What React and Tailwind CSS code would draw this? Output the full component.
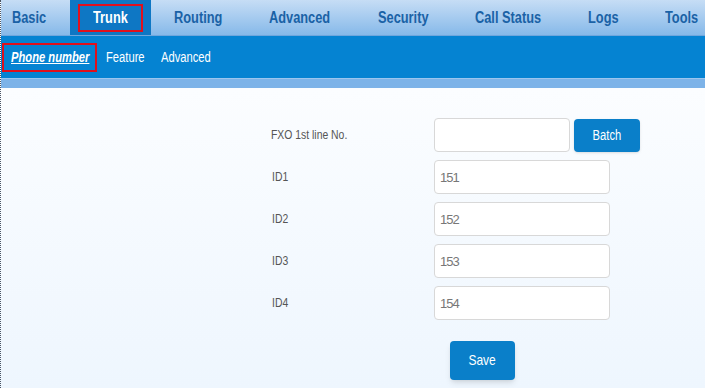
import React, { useState } from "react";

// tab widths follow the reference spacing (text + ~23px each side)
const tabs = [
  { name: "Basic", w: "w-[69px] pl-[11px]" },
  { name: "Trunk", w: "w-[81px] pl-[23px]" },
  { name: "Routing", w: "w-[95px] pl-[23px]" },
  { name: "Advanced", w: "w-[108px] pl-[23px]" },
  { name: "Security", w: "w-[97px] pl-[24px]" },
  { name: "Call Status", w: "w-[113px] pl-[24px]" },
  { name: "Logs", w: "w-[77px] pl-[24px]" },
  { name: "Tools", w: "w-[65px] pl-[24px]" },
];

const font = "font-['Liberation_Sans',Arial,sans-serif]";
const squeeze = "inline-block scale-x-[0.8] origin-left whitespace-nowrap";

const App = () => {
  const [ids, setIds] = useState({ ID1: "151", ID2: "152", ID3: "153", ID4: "154" });
  const [fxo, setFxo] = useState("");

  return (
    <div className={`min-h-[388px] w-[705px] overflow-hidden border-l border-dotted border-gray-600 ${font} bg-gradient-to-b from-white to-[#eef6fe]`}>
      {/* Top nav */}
      <div className="flex h-9 bg-gradient-to-b from-[#c6ddf5] to-[#86b9e9] border-b border-[#6fa6dc]">
        {tabs.map((t) => (
          <div
            key={t.name}
            className={`relative flex shrink-0 items-center h-full text-[16px] font-bold ${t.w} ${
              t.name === "Trunk" ? "bg-[#0e77c4] text-white" : "text-[#1a62a6]"
            }`}
          >
            {t.name === "Trunk" && (
              <span className="absolute left-[8px] right-[8px] top-[4px] bottom-[3px] border-2 border-[#e0101c]"></span>
            )}
            <span className={squeeze}>{t.name}</span>
          </div>
        ))}
      </div>

      {/* Sub nav */}
      <div className="flex items-center h-[42px] bg-[#0583d2] pl-[1px] text-white text-[14px]">
        <div className="flex items-center w-[95px] h-[29px] pl-[7px] border-2 border-[#e0101c] font-bold italic underline">
          <span className={squeeze}>Phone number</span>
        </div>
        <div className="w-[64px] pl-[9px]">
          <span className={squeeze}>Feature</span>
        </div>
        <div>
          <span className={squeeze}>Advanced</span>
        </div>
      </div>
      <div className="h-[10px] bg-[#7db3e8] border-t border-[#9cc6ee]"></div>

      {/* Form */}
      <div className="pt-[30px] pl-[270px] text-[13px] text-[#555]">
        <div className="flex items-center h-[34px] mb-[8px]">
          <div className="w-[163px]">
            <span className={squeeze}>FXO 1st line No.</span>
          </div>
          <input
            value={fxo}
            onChange={(e) => setFxo(e.target.value)}
            className="w-[136px] h-[34px] bg-white border border-[#d8d8d8] rounded-[4px] px-[6px] outline-none"
          />
          <button className="ml-[4px] w-[66px] h-[33px] bg-[#0a7fc9] text-white text-[14px] rounded-[4px] shadow-sm">
            <span className="inline-block scale-x-[0.8]">Batch</span>
          </button>
        </div>
        {Object.keys(ids).map((k) => (
          <div key={k} className="flex items-center h-[34px] mb-[8px]">
            <div className="w-[163px] pl-[1px]">
              <span className={squeeze}>{k}</span>
            </div>
            <input
              value={ids[k]}
              onChange={(e) => setIds({ ...ids, [k]: e.target.value })}
              className="w-[176px] h-[34px] bg-white border border-[#d8d8d8] rounded-[4px] px-[5px] text-[#777] tracking-[-1px] outline-none"
            />
          </div>
        ))}
        <div className="pl-[179px] pt-[13px]">
          <button className="w-[65px] h-[39px] bg-[#0a7fc9] text-white text-[15px] rounded-[4px] shadow-md">
            <span className="inline-block scale-x-[0.8]">Save</span>
          </button>
        </div>
      </div>
    </div>
  );
};

export default App;
